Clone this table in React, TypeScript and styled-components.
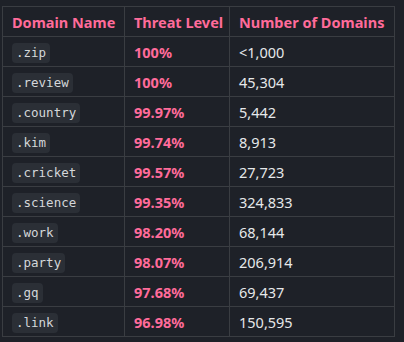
import React from "react";
import styled, { createGlobalStyle } from "styled-components";

const Global = createGlobalStyle`
  html, body { margin: 0; padding: 0; background: #1e2128; }
  body { font-family: "Noto Sans", "Open Sans", sans-serif; }
`;

const Page = styled.div`
  padding: 6px 0 0 2px;
  background: #1e2128;
  height: 342px;
  box-sizing: border-box;
`;

const Table = styled.table`
  border-collapse: collapse;
  table-layout: fixed;
  width: 392px;
`;

const Th = styled.th<{ $w: number }>`
  width: ${(p) => p.$w}px;
  height: 30px;
  box-sizing: border-box;
  padding: 0 9px;
  border: 1px solid #3a3d42;
  text-align: left;
  color: #ff6b9a;
  font-size: 14.5px;
  font-weight: 700;
  white-space: nowrap;
`;

const Td = styled.td`
  height: 30px;
  box-sizing: border-box;
  padding: 0 9px;
  border: 1px solid #3a3d42;
  color: #e6e8ea;
  font-size: 14.5px;
  white-space: nowrap;
`;

const Pct = styled(Td)`
  color: #ff6b9a;
  font-weight: 700;
`;

const Code = styled.code`
  display: inline-block;
  font-family: "DejaVu Sans Mono", monospace;
  font-size: 12.5px;
  line-height: 20px;
  padding: 0 4px;
  border-radius: 4px;
  background: #2b2f36;
  color: #d4d7da;
`;

const rows: [string, string, string][] = [
  [".zip", "100%", "<1,000"],
  [".review", "100%", "45,304"],
  [".country", "99.97%", "5,442"],
  [".kim", "99.74%", "8,913"],
  [".cricket", "99.57%", "27,723"],
  [".science", "99.35%", "324,833"],
  [".work", "98.20%", "68,144"],
  [".party", "98.07%", "206,914"],
  [".gq", "97.68%", "69,437"],
  [".link", "96.98%", "150,595"],
];

export default function App() {
  return (
    <Page>
      <Global />
      <Table>
        <thead>
          <tr>
            <Th $w={122}>Domain Name</Th>
            <Th $w={105}>Threat Level</Th>
            <Th $w={165}>Number of Domains</Th>
          </tr>
        </thead>
        <tbody>
          {rows.map(([d, t, n]) => (
            <tr key={d}>
              <Td>
                <Code>{d}</Code>
              </Td>
              <Pct>{t}</Pct>
              <Td>{n}</Td>
            </tr>
          ))}
        </tbody>
      </Table>
    </Page>
  );
}
